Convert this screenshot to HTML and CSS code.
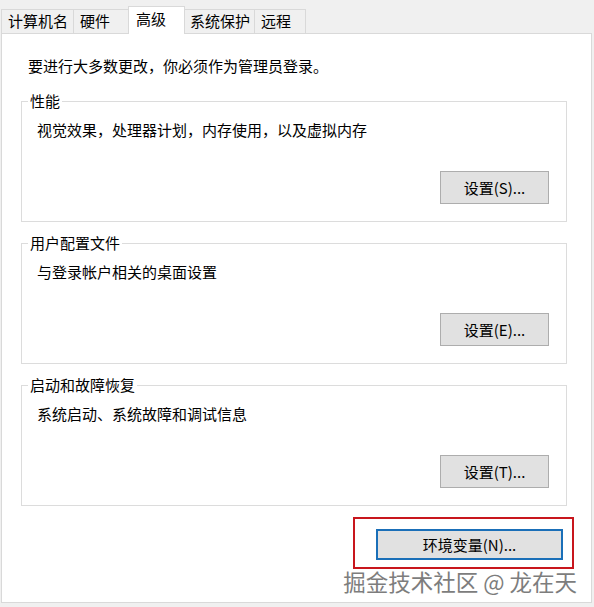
FILE: index.html
```html
<!DOCTYPE html>
<html lang="zh-CN">
<head>
<meta charset="utf-8">
<title>系统属性 - 高级</title>
<link rel="stylesheet" href="styles.css">
</head>
<body>
<div class="tabs">
  <div class="tab tab-name">计算机名</div>
  <div class="tab tab-hw">硬件</div>
  <div class="tab tab-adv active">高级</div>
  <div class="tab tab-prot">系统保护</div>
  <div class="tab tab-remote">远程</div>
</div>
<div class="panel">
  <p class="intro">要进行大多数更改，你必须作为管理员登录。</p>

  <fieldset class="group">
    <legend>性能</legend>
    <p class="desc">视觉效果，处理器计划，内存使用，以及虚拟内存</p>
    <div class="actions"><button class="btn">设置(S)...</button></div>
  </fieldset>

  <fieldset class="group">
    <legend>用户配置文件</legend>
    <p class="desc">与登录帐户相关的桌面设置</p>
    <div class="actions"><button class="btn">设置(E)...</button></div>
  </fieldset>

  <fieldset class="group">
    <legend>启动和故障恢复</legend>
    <p class="desc">系统启动、系统故障和调试信息</p>
    <div class="actions"><button class="btn">设置(T)...</button></div>
  </fieldset>

  <div class="env-row">
    <div class="highlight">
      <button class="btn btn-default">环境变量(N)...</button>
    </div>
  </div>

  <div class="watermark">掘金技术社区 @ 龙在天</div>
</div>
</body>
</html>
```

FILE: styles.css
```css
* { box-sizing: border-box; }

html, body {
  margin: 0;
  padding: 0;
  background: #f0f0f0;
}

body {
  width: 594px;
  height: 607px;
  font-family: "Noto Sans CJK SC", "Liberation Sans", sans-serif;
  font-size: 15px;
  color: #000;
  overflow: hidden;
}

.tabs {
  display: flex;
  align-items: flex-end;
  height: 34px;
  padding-left: 2px;
  margin-bottom: -1px;
  position: relative;
  z-index: 1;
}

.tab {
  height: 24px;
  line-height: 22px;
  padding-left: 6px;
  margin-left: -1px;
  border: 1px solid #d9d9d9;
  border-bottom: none;
  background: #f0f0f0;
  white-space: nowrap;
  margin-bottom: 1px;
}

.tab-name { width: 73px; }
.tab-hw { width: 56px; }
.tab-adv { width: 57px; }
.tab-prot { width: 71px; padding-left: 5px; }
.tab-remote { width: 52px; }

.tab.active {
  height: 28px;
  line-height: 24px;
  background: #fff;
  margin-bottom: 0;
  padding-left: 7px;
}

.panel {
  position: relative;
  margin-left: 1px;
  width: 591px;
  height: 570px;
  background: #fff;
  border: 1px solid #d9d9d9;
  padding: 22px 24px 0 19px;
}

.intro {
  margin: 0 0 15px 7px;
  line-height: 20px;
  white-space: nowrap;
}

.group {
  margin: 0 0 11px 0;
  padding: 0 17px 17px 15px;
  border: 1px solid #dcdcdc;
  min-width: 0;
}

.group legend {
  margin-left: -9px;
  padding: 0 2px;
  line-height: 20px;
}

.desc {
  margin: 9px 0 0 0;
  line-height: 20px;
  white-space: nowrap;
}

.actions {
  display: flex;
  justify-content: flex-end;
  margin-top: 31px;
}

.btn {
  font: inherit;
  color: #000;
  background: #e1e1e1;
  border: 1px solid #adadad;
  height: 33px;
  width: 109px;
  padding: 0;
  line-height: 31px;
}

.env-row {
  display: flex;
  justify-content: flex-end;
  margin-top: 9px;
  margin-right: -7px;
}

.highlight {
  border: 2px solid #c8161d;
  padding: 10px 9px 7px 21px;
}

.btn-default {
  width: 187px;
  height: 31px;
  line-height: 27px;
  border: 2px solid #1a6fb8;
}

.watermark {
  position: absolute;
  right: 14px;
  bottom: 8px;
  font-size: 22.5px;
  line-height: 26px;
  color: #7d7d7d;
  text-shadow: 0 0 2px #fff, 0 0 1px #fff;
  white-space: nowrap;
}
```
